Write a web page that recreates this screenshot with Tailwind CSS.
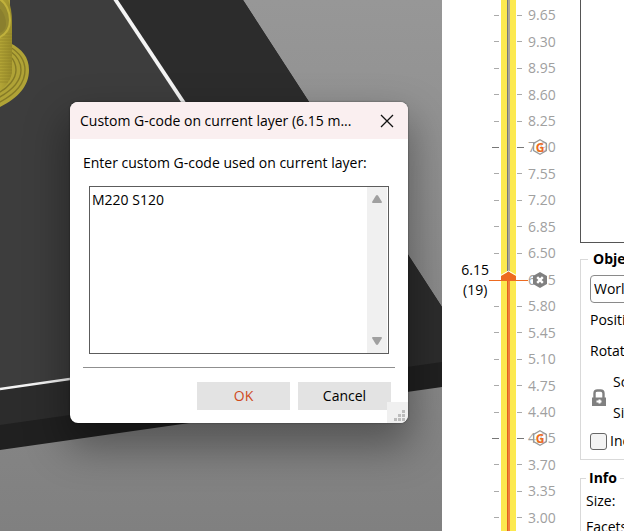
<!DOCTYPE html>
<html lang="en">
<head>
    <meta charset="UTF-8">
    <meta name="viewport" content="width=device-width, initial-scale=1.0">
    <title>Slicer Preview</title>
    <script src="https://cdn.jsdelivr.net/npm/@tailwindcss/browser@4"></script>
</head>
<body class="h-screen overflow-hidden bg-white font-['Open_Sans',sans-serif] text-sm text-black">
    <div class="flex h-full">

        <!-- 3D viewport -->
        <main class="relative min-w-0 flex-1 overflow-hidden bg-[#888888]">
            <svg class="block h-full w-full" viewBox="0 0 442 531" preserveAspectRatio="xMinYMin slice" aria-hidden="true">
                <defs>
                    <linearGradient id="sky" x1="0" y1="0" x2="0" y2="1">
                        <stop offset="0" stop-color="#979797"/>
                        <stop offset="1" stop-color="#808080"/>
                    </linearGradient>
                    <linearGradient id="wall" x1="0" y1="0" x2="1" y2="0">
                        <stop offset="0" stop-color="#b3a536"/>
                        <stop offset="1" stop-color="#998c2a"/>
                    </linearGradient>
                </defs>
                <rect width="442" height="531" fill="url(#sky)"/>
                <!-- print bed -->
                <path d="M0 0H243L442 307V387L0 450Z" fill="#202020"/>
                <path d="M0 0H243L442 307V362L0 425Z" fill="#2c2c2c"/>
                <path d="M0 0H115L341 340L0 389Z" fill="#3d3d3d"/>
                <path d="M115 -1L341 340" stroke="#f4f4f4" stroke-width="3.8"/>
                <path d="M341 340L0 389" stroke="#f4f4f4" stroke-width="2.4"/>
                <!-- brim -->
                <path d="M-2 108C17 99 29 87 29 70C29 57 22 49 10 43V0H-2Z" fill="#b0a336"/>
                <g fill="none" stroke="#857a26" stroke-width="1.4">
                    <path d="M-2 103C14 95 25 84 25 70C25 60 20 53 10 47"/>
                    <path d="M-2 98C11 91 21 82 21 70C21 62 17 56 10 51"/>
                    <path d="M-2 93C8 88 16 79 16 70C16 64 14 60 10 56"/>
                </g>
                <!-- printed tube -->
                <path d="M0 0H8C11 6 12 14 12 22V72C11 80 6 86 0 90Z" fill="url(#wall)"/>
                <path d="M0 34h12M0 37h12M0 40h12M0 43h12M0 46h12M0 49h12M0 52h12M0 55h12M0 58h12M0 61h12M0 64h12M0 67h12M0 70h12M0 73h12M0 76h11M0 79h10M0 82h8" stroke="#8d8127" stroke-width="1" stroke-opacity=".6"/>
                <path d="M-2 -2C6 2 10 12 10 20C10 29 5 35 -2 38Z" fill="#958a30" stroke="#c0b13c" stroke-width="2"/>
                <path d="M-2 6C4 12 6 18 6 24C6 29 3 32 -2 34Z" fill="#8a7f2e"/>
            </svg>

            <!-- Custom G-code dialog -->
            <form role="dialog" aria-labelledby="dialogTitle" class="absolute top-[102px] left-[70px] w-[338px] overflow-hidden rounded-lg bg-white shadow-[0_20px_40px_4px_rgba(0,0,0,0.36),0_0_2px_rgba(0,0,0,0.5)]" onsubmit="return false">
                <div class="flex h-[37px] items-center bg-[#faeff0] px-[10px]">
                    <h1 id="dialogTitle">Custom G-code on current layer (6.15 m...</h1>
                    <button type="button" aria-label="Close" class="ml-auto p-1">
                        <svg class="h-[14px] w-[14px]" viewBox="0 0 14 14" fill="none" stroke="#111" stroke-width="1.3"><path d="M1 1L13 13M13 1L1 13"/></svg>
                    </button>
                </div>
                <div class="px-[13px] pt-3">
                    <label for="gcode" class="block h-6 leading-6">Enter custom G-code used on current layer:</label>
                    <div class="mt-[11px] mr-1.5 ml-1.5 flex h-[168px] border border-[#5c5c5c] pr-px">
                        <textarea id="gcode" class="min-w-0 flex-1 resize-none pt-[3px] pl-0.5 outline-none">M220 S120</textarea>
                        <div class="flex w-5 flex-col items-center justify-between bg-[#f0f0f0] py-2">
                            <svg class="h-2 w-[10px]" viewBox="0 0 10 8" fill="#a0a0a0"><path d="M4 .5Q5 -.4 6 .5L10 7Q10 8 9 8H1Q0 8 0 7Z"/></svg>
                            <svg class="h-2 w-[10px]" viewBox="0 0 10 8" fill="#a0a0a0"><path d="M4 7.5Q5 8.4 6 7.5L10 1Q10 0 9 0H1Q0 0 0 1Z"/></svg>
                        </div>
                    </div>
                    <hr class="mt-[13px] border-[#8f8f8f]">
                </div>
                <div class="flex justify-end gap-2 pt-[14px] pr-[17px] pb-[13px]">
                    <button type="submit" class="h-7 w-[93px] bg-[#e3e3e3] text-[#cf4a1c]">OK</button>
                    <button type="button" class="h-7 w-[93px] bg-[#e3e3e3]">Cancel</button>
                </div>
                <svg class="absolute right-0 bottom-0 h-[21px] w-[21px]" viewBox="0 0 21 21" aria-hidden="true">
                    <path d="M0 0h21v21H0z" fill="#f0f0f0"/>
                    <path d="M15 8h3v3h-3zM11 12h3v3h-3zM15 12h3v3h-3zM7 16h3v3H7zM11 16h3v3h-3zM15 16h3v3h-3z" fill="#bdbdbd"/>
                </svg>
            </form>
        </main>

        <!-- Layer slider -->
        <section aria-label="Layers" class="flex w-[138px] shrink-0">
            <div id="leftTicks" class="relative flex w-[59px] flex-col pt-0.5"></div>
            <div class="flex w-[15px] flex-col items-center bg-[#fce94f]">
                <div class="w-[3px] grow-[280] border-l border-[#77777a] bg-[#aca793]"></div>
                <div class="w-[3px] grow-[251] border-l border-[#e0601f] bg-[#f0803c]"></div>
            </div>
            <div id="rightTicks" class="flex flex-1 flex-col pt-0.5"></div>
        </section>

        <!-- Side panel -->
        <aside class="flex w-11 shrink-0 flex-col overflow-hidden whitespace-nowrap">
            <div class="h-[243px] w-[300px] shrink-0 border-b border-l border-[#555]"></div>
            <fieldset class="mt-1.5 h-[211px] w-[300px] shrink-0 border border-[#d9d9d9] pl-[9px]">
                <legend class="ml-[-2px] h-5 px-[5px] leading-5 font-bold">Object manipulation</legend>
                <select aria-label="Coordinates" class="mt-1.5 block h-7 w-[200px] appearance-none rounded-sm border border-[#8a8a8a] pl-[3px]">
                    <option>World coordinates</option>
                </select>
                <p class="mt-[7px] leading-5">Position:</p>
                <p class="mt-[11px] leading-5">Rotate:</p>
                <div class="mt-[11px] flex items-center">
                    <svg class="mr-1.5 ml-px h-[18px] w-4" viewBox="0 0 16 18"><path d="M3.5 9V4.5Q3.5 1.5 6.5 1.5H9.5Q12.5 1.5 12.5 4.5V9" fill="none" stroke="#808080" stroke-width="2.4"/><path d="M1 8.5h14v8.5H1z" fill="#808080"/><path d="M5.5 11.5h2v-1h2v1h1v2h-1v1h-2v-1h-2z" fill="#fff"/></svg>
                    <div class="leading-5">
                        <p>Scale factors:</p>
                        <p class="mt-[11px]">Size [World]:</p>
                    </div>
                </div>
                <label class="mt-2 flex items-center gap-[3px] leading-5"><input type="checkbox" class="h-[17px] w-[17px] appearance-none rounded-[3px] border border-[#666] bg-[#f3f3f3]">Inches</label>
            </fieldset>
            <fieldset class="mt-2 h-[120px] w-[300px] shrink-0 border border-[#d9d9d9] pl-[5px]">
                <legend class="px-[3px] leading-5 font-bold">Info</legend>
                <p class="mt-[3px] leading-5">Size:</p>
                <p class="mt-1.5 leading-5">Facets:</p>
            </fieldset>
        </aside>
    </div>

    <script>
        const layers = ["9.65", "9.30", "8.95", "8.60", "8.25", "7.90", "7.55", "7.20", "6.85", "6.50",
            "6.15", "5.80", "5.45", "5.10", "4.75", "4.40", "4.05", "3.70", "3.35", "3.00"];
        const current = "6.15";
        const gcode = ["7.90", "4.05"];

        const gIcon = `<svg class="absolute left-4 h-4 w-4" viewBox="0 0 16 16">
            <path d="M8 .8L14.4 4.4V11.6L8 15.2L1.6 11.6V4.4Z" fill="#fff" fill-opacity=".4" stroke="#999" stroke-width="1.2"/>
            <text x="8" y="12.5" text-anchor="middle" font-size="12" font-weight="bold" fill="#ed6b21">G</text></svg>`;
        const removeIcon = `<svg class="absolute left-4 h-4 w-4" viewBox="0 0 16 16">
            <path d="M8 0L15 4V12L8 16L1 12V4Z" fill="#808080"/>
            <path d="M5.2 5.2L10.8 10.8M10.8 5.2L5.2 10.8" stroke="#fff" stroke-width="2.4"/></svg>`;

        // current layer: line across the track with the thumb on it
        const thumb = `<svg class="absolute -right-[27px] h-5 w-[39px]" viewBox="0 0 39 20">
            <path d="M12 11V6L19.500 1.500L27 6V11Z" fill="#ed6b21"/>
            <path d="M11.500 5.500L19.500 1L27.500 5.500" fill="none" stroke="#fff"/>
            <path d="M0 10h39v1H0z" fill="#ed6b21" shape-rendering="crispEdges"/></svg>`;

        layers.forEach(layer => {
            const active = layer === current;
            const major = gcode.includes(layer);
            const tick = major ? "h-px w-[7px] bg-[#777]" : "h-px w-[5px] bg-[#aaa]";

            document.getElementById("leftTicks").innerHTML += active
                ? `<div class="relative flex flex-1 items-center justify-end">
                    <div class="absolute right-3 text-center leading-5">6.15<br>(19)</div>${thumb}
                </div>`
                : `<div class="flex flex-1 items-center justify-end pr-0.5"><div class="${tick}"></div></div>`;

            document.getElementById("rightTicks").innerHTML += `<div class="flex flex-1 items-center">
                <div class="w-3 pl-px">${active ? "" : `<div class="${tick}"></div>`}</div>
                <div class="relative flex items-center leading-5 text-[#a0a0a0]"><span>${layer}</span>
                    <span class="absolute -left-3 flex items-center">${active ? removeIcon : major ? gIcon : ""}</span></div>
            </div>`;
        });
    </script>
</body>
</html>
